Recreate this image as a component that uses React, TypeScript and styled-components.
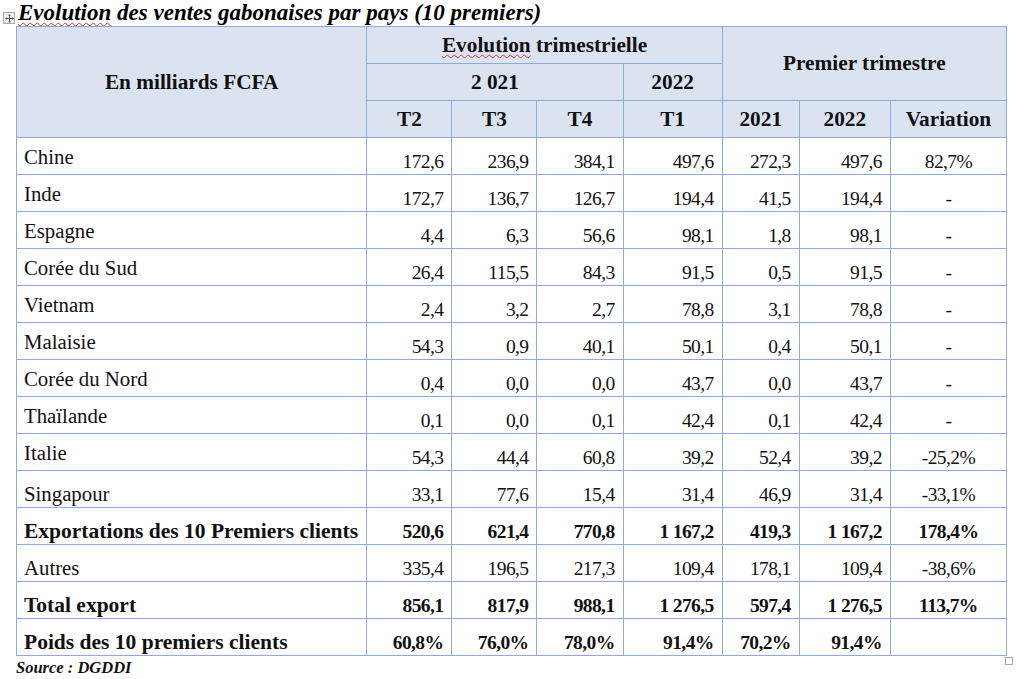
import React from "react";
import styled, { createGlobalStyle } from "styled-components";

const Global = createGlobalStyle`
  html, body { margin: 0; padding: 0; background: #ffffff; }
  body { font-family: "Liberation Serif", "Times New Roman", serif; color: #111; }
`;

const BORDER = "#8eaadb";
const HEAD_BG = "#dbe3f1";

const Page = styled.div`
  width: 1024px;
  height: 679px;
  box-sizing: border-box;
  padding: 0 0 0 16px;
  position: relative;
  overflow: hidden;
`;

const TitleRow = styled.div`
  position: relative;
  height: 26px;
  display: flex;
  align-items: flex-end;
`;

const MoveHandle = styled.div`
  position: absolute;
  left: -13px;
  top: 12px;
  width: 10px;
  height: 10px;
  border: 1px solid #a6a6a6;
  background: #f4f4f4;
  display: flex;
  align-items: center;
  justify-content: center;
`;

const Title = styled.h1`
  margin: 0;
  padding-left: 2px;
  font-family: "Liberation Serif", serif;
  font-weight: bold;
  font-style: italic;
  font-size: 23px;
  line-height: 26px;
  color: #000;
  white-space: nowrap;
`;

const Spell = styled.span`
  text-decoration: underline wavy #e03030;
  text-decoration-thickness: 1px;
  text-underline-offset: 2px;
`;

const Table = styled.table`
  border-collapse: collapse;
  table-layout: fixed;
  width: 991px;
`;

const Th = styled.th`
  background: ${HEAD_BG};
  border: 1px solid ${BORDER};
  font-weight: bold;
  font-size: 21.3px;
  text-align: center;
  vertical-align: middle;
  padding: 0;
  height: 36px;
  white-space: nowrap;
  color: #111;
`;

const Label = styled.td<{ $bold?: boolean; $low?: boolean }>`
  border: 1px solid ${BORDER};
  font-size: ${(p) => (p.$bold ? 21.5 : 20.8)}px;
  font-weight: ${(p) => (p.$bold ? "bold" : "normal")};
  text-align: left;
  vertical-align: top;
  padding: ${(p) => (p.$low ? 11 : 7)}px 0 0 7px;
  height: ${(p) => (p.$low ? 25 : 29)}px;
  white-space: nowrap;
  color: #111;
`;

const Num = styled.td<{ $bold?: boolean; $center?: boolean }>`
  border: 1px solid ${BORDER};
  font-size: 19.5px;
  font-weight: ${(p) => (p.$bold ? "bold" : "normal")};
  text-align: ${(p) => (p.$center ? "center" : "right")};
  vertical-align: bottom;
  padding: 0 ${(p) => (p.$center ? 0 : 8)}px 1px 0;
  letter-spacing: -0.6px;
  white-space: nowrap;
  color: #111;
`;

const Source = styled.div`
  margin-top: 3px;
  font-weight: bold;
  font-style: italic;
  font-size: 16.5px;
  line-height: 18px;
  color: #111;
`;

const Corner = styled.div`
  position: absolute;
  left: 1005px;
  top: 657px;
  width: 6px;
  height: 6px;
  border: 1px solid #a6a6a6;
  background: #fff;
`;

type Row = { label: string; vals: string[]; bold?: boolean; low?: boolean };

const rows: Row[] = [
  { label: "Chine", vals: ["172,6", "236,9", "384,1", "497,6", "272,3", "497,6", "82,7%"] },
  { label: "Inde", vals: ["172,7", "136,7", "126,7", "194,4", "41,5", "194,4", "-"] },
  { label: "Espagne", vals: ["4,4", "6,3", "56,6", "98,1", "1,8", "98,1", "-"] },
  { label: "Corée du Sud", vals: ["26,4", "115,5", "84,3", "91,5", "0,5", "91,5", "-"] },
  { label: "Vietnam", vals: ["2,4", "3,2", "2,7", "78,8", "3,1", "78,8", "-"] },
  { label: "Malaisie", vals: ["54,3", "0,9", "40,1", "50,1", "0,4", "50,1", "-"] },
  { label: "Corée du Nord", vals: ["0,4", "0,0", "0,0", "43,7", "0,0", "43,7", "-"] },
  { label: "Thaïlande", vals: ["0,1", "0,0", "0,1", "42,4", "0,1", "42,4", "-"] },
  { label: "Italie", vals: ["54,3", "44,4", "60,8", "39,2", "52,4", "39,2", "-25,2%"] },
  { label: "Singapour", low: true, vals: ["33,1", "77,6", "15,4", "31,4", "46,9", "31,4", "-33,1%"] },
  { label: "Exportations des 10 Premiers clients", bold: true, low: true, vals: ["520,6", "621,4", "770,8", "1 167,2", "419,3", "1 167,2", "178,4%"] },
  { label: "Autres", low: true, vals: ["335,4", "196,5", "217,3", "109,4", "178,1", "109,4", "-38,6%"] },
  { label: "Total export", bold: true, low: true, vals: ["856,1", "817,9", "988,1", "1 276,5", "597,4", "1 276,5", "113,7%"] },
  { label: "Poids des 10 premiers clients", bold: true, low: true, vals: ["60,8%", "76,0%", "78,0%", "91,4%", "70,2%", "91,4%", ""] },
];

const widths = [350, 85, 85, 86, 99, 77, 91, 116];

export default function App() {
  return (
    <Page>
      <Global />
      <TitleRow>
        <MoveHandle>
          <svg width="9" height="9" viewBox="0 0 9 9">
            <path d="M4.5 0.5v8M0.5 4.5h8" stroke="#555" strokeWidth="1" fill="none" />
            <path d="M4.5 0.3l-1.5 1.5h3zM4.5 8.7l-1.5-1.5h3zM0.3 4.5l1.5-1.5v3zM8.7 4.5l-1.5-1.5v3z" fill="#555" />
          </svg>
        </MoveHandle>
        <Title>
          <Spell>Evolution</Spell> des ventes gabonaises par pays (10 premiers)
        </Title>
      </TitleRow>
      <Table>
        <colgroup>
          {widths.map((w, i) => (
            <col key={i} style={{ width: w }} />
          ))}
        </colgroup>
        <thead>
          <tr>
            <Th rowSpan={3}>En milliards FCFA</Th>
            <Th colSpan={4}>
              <Spell>Evolution</Spell> trimestrielle
            </Th>
            <Th colSpan={3} rowSpan={2}>Premier trimestre</Th>
          </tr>
          <tr>
            <Th colSpan={3}>2 021</Th>
            <Th>2022</Th>
          </tr>
          <tr>
            <Th>T2</Th>
            <Th>T3</Th>
            <Th>T4</Th>
            <Th>T1</Th>
            <Th>2021</Th>
            <Th>2022</Th>
            <Th>Variation</Th>
          </tr>
        </thead>
        <tbody>
          {rows.map((r) => (
            <tr key={r.label}>
              <Label $bold={r.bold} $low={r.low}>{r.label}</Label>
              {r.vals.map((v, i) => (
                <Num key={i} $bold={r.bold} $center={i === 6}>
                  {v}
                </Num>
              ))}
            </tr>
          ))}
        </tbody>
      </Table>
      <Source>Source : DGDDI</Source>
      <Corner />
    </Page>
  );
}
